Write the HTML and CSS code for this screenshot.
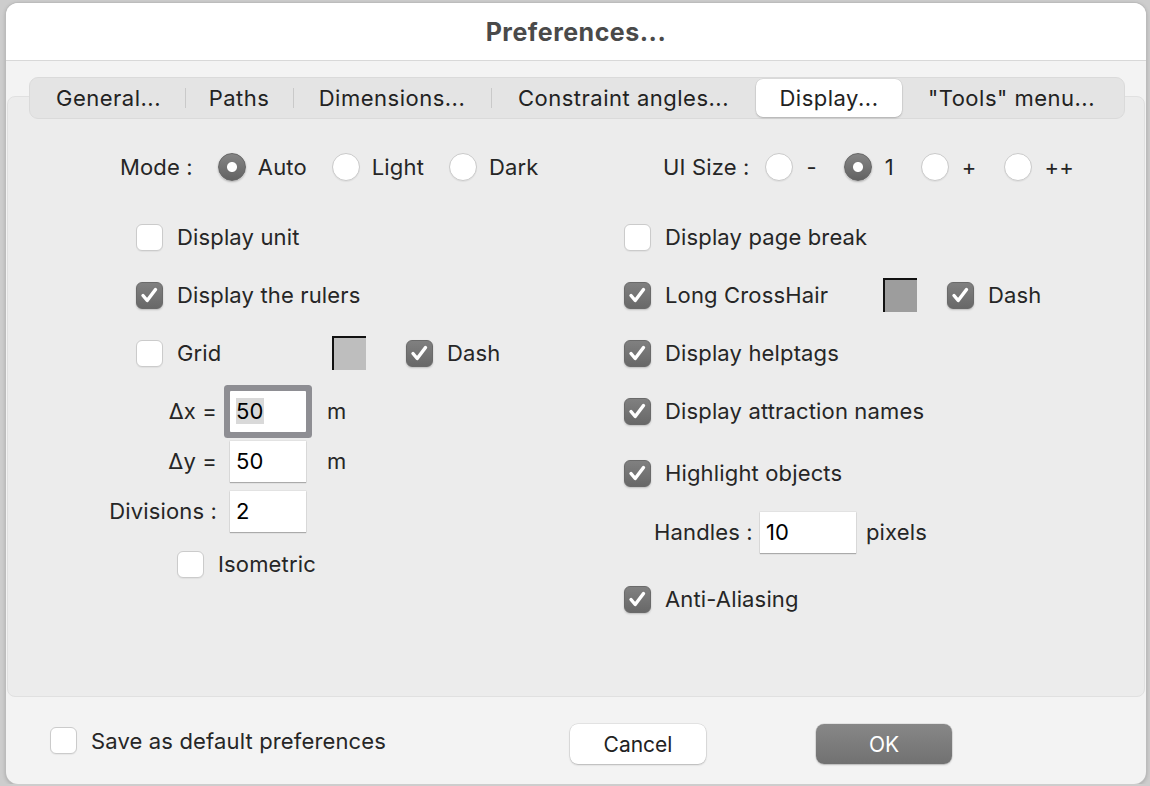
FILE: index.html
```html
<!DOCTYPE html>
<html lang="en">
<head>
  <meta charset="UTF-8" />
  <title>Preferences...</title>
  <link rel="stylesheet" href="styles.css">
</head>
<body>
  <div class="window">
    <div class="titlebar">Preferences...</div>

    <div class="tabbox">
      <div class="tabs">
        <span class="tab">General...</span>
        <span class="tab">Paths</span>
        <span class="tab">Dimensions...</span>
        <span class="tab">Constraint angles...</span>
        <span class="tab active">Display...</span>
        <span class="tab">"Tools" menu...</span>
      </div>

      <div class="columns">
        <!-- colonne gauche -->
        <div class="col">
          <div class="row mode-row">
            <span class="row-label">Mode :</span>
            <span class="radio"><span class="circle on"></span>Auto</span>
            <span class="radio"><span class="circle"></span>Light</span>
            <span class="radio"><span class="circle"></span>Dark</span>
          </div>

          <div class="row indent mt-lg">
            <span class="check"><span class="box"></span>Display unit</span>
          </div>

          <div class="row indent mt">
            <span class="check"><span class="box on"><svg viewBox="0 0 25 25"><path d="M6 12.5l4.2 5 8.3-11"/></svg></span>Display the rulers</span>
          </div>

          <div class="row indent mt">
            <span class="check"><span class="box"></span><span class="grid-label">Grid</span></span>
            <span class="swatch swatch-grid"></span>
            <span class="check"><span class="box on"><svg viewBox="0 0 25 25"><path d="M6 12.5l4.2 5 8.3-11"/></svg></span>Dash</span>
          </div>

          <div class="row field-row mt">
            <span class="field-label">Δx =</span>
            <span class="input focused"><span class="selected">50</span></span>
            <span class="unit">m</span>
          </div>

          <div class="row field-row mt-sm">
            <span class="field-label">Δy =</span>
            <span class="input">50</span>
            <span class="unit">m</span>
          </div>

          <div class="row field-row mt-sm">
            <span class="field-label">Divisions :</span>
            <span class="input">2</span>
          </div>

          <div class="row iso-row mt-iso">
            <span class="check"><span class="box"></span>Isometric</span>
          </div>
        </div>

        <!-- colonne droite -->
        <div class="col">
          <div class="row size-row">
            <span class="row-label">UI Size :</span>
            <span class="radio"><span class="circle"></span>-</span>
            <span class="radio"><span class="circle on"></span>1</span>
            <span class="radio"><span class="circle"></span>+</span>
            <span class="radio"><span class="circle"></span>++</span>
          </div>

          <div class="row mt-lg">
            <span class="check"><span class="box"></span>Display page break</span>
          </div>

          <div class="row mt">
            <span class="check"><span class="box on"><svg viewBox="0 0 25 25"><path d="M6 12.5l4.2 5 8.3-11"/></svg></span><span class="cross-label">Long CrossHair</span></span>
            <span class="swatch swatch-cross"></span>
            <span class="check"><span class="box on"><svg viewBox="0 0 25 25"><path d="M6 12.5l4.2 5 8.3-11"/></svg></span>Dash</span>
          </div>

          <div class="row mt">
            <span class="check"><span class="box on"><svg viewBox="0 0 25 25"><path d="M6 12.5l4.2 5 8.3-11"/></svg></span>Display helptags</span>
          </div>

          <div class="row mt">
            <span class="check"><span class="box on"><svg viewBox="0 0 25 25"><path d="M6 12.5l4.2 5 8.3-11"/></svg></span>Display attraction names</span>
          </div>

          <div class="row mt-md">
            <span class="check"><span class="box on"><svg viewBox="0 0 25 25"><path d="M6 12.5l4.2 5 8.3-11"/></svg></span>Highlight objects</span>
          </div>

          <div class="row handles-row mt-hd">
            <span class="handles-label">Handles :</span>
            <span class="input wide">10</span>
            <span class="unit-px">pixels</span>
          </div>

          <div class="row mt-aa">
            <span class="check"><span class="box on"><svg viewBox="0 0 25 25"><path d="M6 12.5l4.2 5 8.3-11"/></svg></span>Anti-Aliasing</span>
          </div>
        </div>
      </div>
    </div>

    <div class="footer">
      <span class="check save"><span class="box"></span>Save as default preferences</span>
      <button class="btn">Cancel</button>
      <button class="btn default">OK</button>
    </div>
  </div>
</body>
</html>
```

FILE: styles.css
```css
* {
  box-sizing: border-box;
}
body {
  margin: 0;
  background: #cdcdcd;
  font-family: Inter, "Noto Sans", sans-serif;
  font-size: 22px;
  letter-spacing: 0.15px;
  color: #262626;
}
.window {
  width: 1140px;
  height: 781px;
  margin: 3px 0 0 6px;
  background: #f3f3f3;
  border-radius: 12px;
  box-shadow: 0 0 0 1px #bcbcbc, 0 1px 4px rgba(0,0,0,0.25);
  display: flex;
  flex-direction: column;
  overflow: hidden;
}
.titlebar {
  flex: none;
  height: 58px;
  background: #fff;
  border-bottom: 1px solid #d8d8d8;
  display: flex;
  align-items: center;
  justify-content: center;
  font-size: 25px;
  font-weight: 700;
  color: #4a4a4a;
  letter-spacing: 0.5px;
}

/* boite des onglets */
.tabbox {
  flex: none;
  height: 601px;
  margin: 35px 1px 0;
  background: #ececec;
  border: 1px solid #e0e0e0;
  border-radius: 8px;
}
.tabs {
  display: flex;
  width: 1096px;
  height: 42px;
  margin: -20px 0 0 21px;
  padding: 1px 2px;
  background: #e4e4e4;
  border: 1px solid #dadada;
  border-radius: 9px;
}
.tab {
  position: relative;
  display: flex;
  align-items: center;
  justify-content: center;
  flex: none;
  height: 38px;
  color: #222;
  letter-spacing: 0.5px;
}
.tab:nth-child(1) { width: 153px; }
.tab:nth-child(2) { width: 108px; }
.tab:nth-child(3) { width: 198px; }
.tab:nth-child(4) { width: 265px; }
.tab:nth-child(5) { width: 146px; }
.tab:nth-child(6) { width: 219px; }
.tab + .tab::before {
  content: "";
  position: absolute;
  left: 0;
  top: 9px;
  height: 20px;
  border-left: 1px solid #c9c9c9;
}
.tab.active::before,
.tab.active + .tab::before {
  display: none;
}
.tab.active {
  background: #fff;
  border-radius: 7px;
  box-shadow: 0 0 0 0.5px rgba(0,0,0,0.08), 0 1px 2px rgba(0,0,0,0.2);
}

/* colonnes */
.columns {
  display: grid;
  grid-template-columns: 524px 1fr;
  padding-left: 92px;
  margin-top: 28px;
}
.row {
  display: flex;
  align-items: center;
  height: 40px;
}
.mt-lg { margin-top: 30px; }
.mt { margin-top: 18px; }
.mt-sm { margin-top: 10px; }
.mt-iso { margin-top: 13px; }
.mt-md { margin-top: 22px; }
.mt-hd { margin-top: 19px; }
.mt-aa { margin-top: 27px; }
.indent { padding-left: 36px; }

.mode-row { padding-left: 20px; }
.mode-row .row-label { margin-right: 25px; }
.mode-row .radio { margin-right: 25px; gap: 12px; }
.size-row { padding-left: 39px; }
.size-row .row-label { margin-right: 16px; }
.size-row .radio { gap: 13px; margin-right: 27px; }

.radio {
  display: flex;
  align-items: center;
  gap: 13px;
  margin-right: 29px;
}
.circle {
  flex: none;
  width: 28px;
  height: 28px;
  border-radius: 50%;
  background: #fff;
  border: 1px solid #cacaca;
  box-shadow: 0 1px 1px rgba(0,0,0,0.05);
}
.circle.on {
  border-color: #666;
  background: radial-gradient(circle, #fff 0 4.5px, transparent 5.5px), linear-gradient(#858585, #626262);
  box-shadow: 0 1px 2px rgba(0,0,0,0.25);
}

.check {
  display: flex;
  align-items: center;
  gap: 14px;
}
.box {
  flex: none;
  width: 27px;
  height: 27px;
  border-radius: 6px;
  background: #fff;
  border: 1px solid #cbcbcb;
  box-shadow: 0 1px 1px rgba(0,0,0,0.05);
}
.box.on {
  background: linear-gradient(#808080, #686868);
  border-color: #6a6a6a;
  box-shadow: 0 1px 2px rgba(0,0,0,0.2);
}
.box svg {
  display: block;
  width: 25px;
  height: 25px;
  fill: none;
  stroke: #fff;
  stroke-width: 3.4;
  stroke-linecap: round;
  stroke-linejoin: round;
}

.grid-label { width: 155px; }
.cross-label { width: 218px; }
.swatch {
  flex: none;
  width: 34px;
  height: 34px;
  border-top: 2px solid #111;
  border-left: 2px solid #111;
}
.swatch-grid {
  background: #bebebe;
  margin-right: 40px;
}
.swatch-cross {
  background: #9d9d9d;
  margin-right: 30px;
}

/* champs */
.field-label {
  width: 117px;
  text-align: right;
  margin-right: 13px;
}
.input {
  flex: none;
  display: flex;
  align-items: center;
  width: 76px;
  height: 41px;
  padding: 0 6px;
  background: #fff;
  color: #000;
  box-shadow: 0 0 0 0.5px rgba(0,0,0,0.08), 0 1px 1px rgba(0,0,0,0.25);
}
.input.focused {
  border-radius: 1px;
  box-shadow: 0 0 0 6px #8e8e93;
}
.input.wide {
  width: 96px;
}
.selected {
  background: #d9d9d9;
}
.unit {
  margin-left: 21px;
}
.iso-row {
  padding-left: 77px;
}
.handles-row {
  padding-left: 30px;
}
.handles-label {
  width: 106px;
}
.unit-px {
  margin-left: 10px;
}

/* bas de la fenetre */
.footer {
  flex: 1;
  display: flex;
  align-items: center;
  padding-left: 44px;
}
.save {
  width: 520px;
}
.btn {
  width: 136px;
  height: 40px;
  margin-top: 7px;
  border: none;
  border-radius: 8px;
  background: #fff;
  font-family: Inter, "Noto Sans", sans-serif;
  font-size: 21px;
  color: #222;
  box-shadow: 0 0 0 0.5px rgba(0,0,0,0.12), 0 1px 2px rgba(0,0,0,0.2);
}
.btn.default {
  margin-left: 110px;
  background: linear-gradient(#878787, #717171);
  color: #fff;
}
```
